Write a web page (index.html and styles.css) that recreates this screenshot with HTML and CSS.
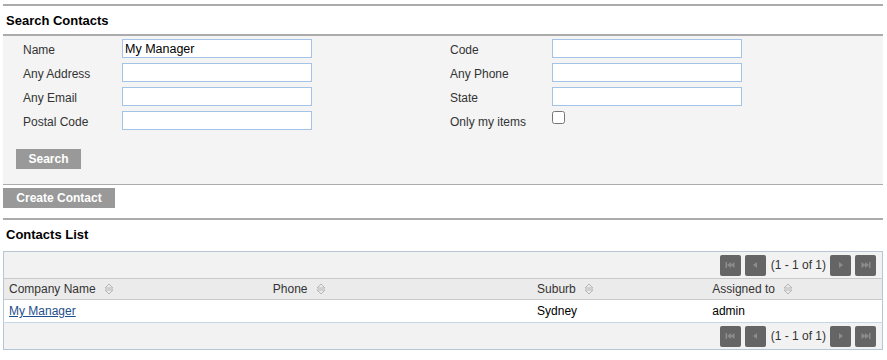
FILE: index.html
```html
<!DOCTYPE html>
<html lang="en">
<head>
  <meta charset="UTF-8">
  <title>Contacts</title>
  <link rel="stylesheet" href="styles.css">
</head>
<body>
  <div class="page">
    <div class="section-title">Search Contacts</div>
    <div class="search-panel">
      <div class="search-form">
        <label>Name</label>
        <input type="text" value="My Manager">
        <span></span>
        <label>Code</label>
        <input type="text">

        <label>Any Address</label>
        <input type="text">
        <span></span>
        <label>Any Phone</label>
        <input type="text">

        <label>Any Email</label>
        <input type="text">
        <span></span>
        <label>State</label>
        <input type="text">

        <label>Postal Code</label>
        <input type="text">
        <span></span>
        <label>Only my items</label>
        <div><input type="checkbox" class="check"></div>
      </div>
      <button class="btn search-btn">Search</button>
    </div>

    <button class="btn create-btn">Create Contact</button>

    <div class="section-title list-title">Contacts List</div>

    <table class="contacts">
      <colgroup>
        <col style="width:264px">
        <col style="width:264px">
        <col style="width:175px">
        <col style="width:175px">
      </colgroup>
      <tr class="pager-row">
        <td colspan="4">
          <div class="pager">
            <span class="pg-btn"><svg width="10" height="8" viewBox="0 0 10 8"><rect x="0.5" y="1" width="1.5" height="6" fill="#8c8c8c"/><polygon points="2,4 6,1 6,7" fill="#8c8c8c"/><polygon points="5.5,4 9.5,1 9.5,7" fill="#8c8c8c"/></svg></span>
            <span class="pg-btn"><svg width="10" height="8" viewBox="0 0 10 8"><polygon points="3,4 7,1 7,7" fill="#8c8c8c"/></svg></span>
            <span class="pg-text">(1 - 1 of 1)</span>
            <span class="pg-btn"><svg width="10" height="8" viewBox="0 0 10 8"><polygon points="7,4 3,1 3,7" fill="#8c8c8c"/></svg></span>
            <span class="pg-btn"><svg width="10" height="8" viewBox="0 0 10 8"><polygon points="0.5,1 4.5,4 0.5,7" fill="#8c8c8c"/><polygon points="4,1 8,4 4,7" fill="#8c8c8c"/><rect x="8" y="1" width="1.5" height="6" fill="#8c8c8c"/></svg></span>
          </div>
        </td>
      </tr>
      <tr class="head-row">
        <th>Company Name <svg class="sort" width="10" height="12" viewBox="0 0 10 12"><polygon points="1,5 5,1 9,5" fill="none" stroke="#b5b5b5"/><polygon points="1,7 5,11 9,7" fill="none" stroke="#b5b5b5"/></svg></th>
        <th>Phone <svg class="sort" width="10" height="12" viewBox="0 0 10 12"><polygon points="1,5 5,1 9,5" fill="none" stroke="#b5b5b5"/><polygon points="1,7 5,11 9,7" fill="none" stroke="#b5b5b5"/></svg></th>
        <th>Suburb <svg class="sort" width="10" height="12" viewBox="0 0 10 12"><polygon points="1,5 5,1 9,5" fill="none" stroke="#b5b5b5"/><polygon points="1,7 5,11 9,7" fill="none" stroke="#b5b5b5"/></svg></th>
        <th>Assigned to <svg class="sort" width="10" height="12" viewBox="0 0 10 12"><polygon points="1,5 5,1 9,5" fill="none" stroke="#b5b5b5"/><polygon points="1,7 5,11 9,7" fill="none" stroke="#b5b5b5"/></svg></th>
      </tr>
      <tr class="data-row">
        <td><a href="#">My Manager</a></td>
        <td></td>
        <td>Sydney</td>
        <td>admin</td>
      </tr>
      <tr class="pager-row">
        <td colspan="4">
          <div class="pager">
            <span class="pg-btn"><svg width="10" height="8" viewBox="0 0 10 8"><rect x="0.5" y="1" width="1.5" height="6" fill="#8c8c8c"/><polygon points="2,4 6,1 6,7" fill="#8c8c8c"/><polygon points="5.5,4 9.5,1 9.5,7" fill="#8c8c8c"/></svg></span>
            <span class="pg-btn"><svg width="10" height="8" viewBox="0 0 10 8"><polygon points="3,4 7,1 7,7" fill="#8c8c8c"/></svg></span>
            <span class="pg-text">(1 - 1 of 1)</span>
            <span class="pg-btn"><svg width="10" height="8" viewBox="0 0 10 8"><polygon points="7,4 3,1 3,7" fill="#8c8c8c"/></svg></span>
            <span class="pg-btn"><svg width="10" height="8" viewBox="0 0 10 8"><polygon points="0.5,1 4.5,4 0.5,7" fill="#8c8c8c"/><polygon points="4,1 8,4 4,7" fill="#8c8c8c"/><rect x="8" y="1" width="1.5" height="6" fill="#8c8c8c"/></svg></span>
          </div>
        </td>
      </tr>
    </table>
  </div>
</body>
</html>
```

FILE: styles.css
```css
body {
  margin: 0;
  font-family: "Liberation Sans", Arial, sans-serif;
  font-size: 12px;
  color: #333;
  background: #fff;
}
.page {
  margin: 4px 4px 0 3px;
}
.section-title {
  border-top: 2px solid #ababab;
  border-bottom: 2px solid #ababab;
  height: 28px;
  line-height: 29px;
  padding-left: 3px;
  font-size: 13px;
  font-weight: bold;
  color: #000;
}
.list-title {
  border-bottom: none;
  height: 31px;
  line-height: 30px;
}
.search-panel {
  background-color: #f4f4f4;
  border-bottom: 1px solid #ababab;
  padding-top: 3px;
}
.search-form {
  display: grid;
  grid-template-columns: 99px 190px 138px 102px 190px;
  grid-auto-rows: 24px;
  padding-left: 20px;
}
.search-form label {
  line-height: 23px;
}
.search-form input[type="text"] {
  box-sizing: border-box;
  width: 190px;
  height: 19px;
  margin: 0;
  padding: 0 2px;
  border: 1px solid #a3c4e6;
  background: #fff;
  font-family: "Liberation Sans", Arial, sans-serif;
  font-size: 12.5px;
  color: #000;
  outline: none;
}
.check {
  width: 13px;
  height: 13px;
  margin: 0;
}
.btn {
  display: block;
  background-color: #999;
  color: #fff;
  border: none;
  font-family: "Liberation Sans", Arial, sans-serif;
  font-size: 12px;
  font-weight: bold;
  height: 20px;
  padding: 0;
  cursor: pointer;
}
.search-btn {
  width: 65px;
  margin: 14px 0 15px 13px;
}
.create-btn {
  width: 112px;
  margin: 3px 0 10px 0;
}
.contacts {
  width: 880px;
  border-collapse: collapse;
  table-layout: fixed;
  border: 1px solid #b6c6d6;
}
.contacts td, .contacts th {
  padding: 0 0 0 5px;
  text-align: left;
  white-space: nowrap;
}
.pager-row td {
  background-color: #f2f2f2;
  height: 26px;
  padding: 0;
}
.pager {
  display: flex;
  justify-content: flex-end;
  align-items: center;
  gap: 4px;
  padding-right: 6px;
}
.pg-btn {
  width: 21px;
  height: 21px;
  border-radius: 2px;
  background-color: #656565;
  display: flex;
  align-items: center;
  justify-content: center;
}
.pg-text {
  margin: 0 0 0 1px;
  color: #333;
}
.head-row th {
  background-color: #ebebeb;
  border-top: 1px solid #c9c9c9;
  border-bottom: 1px solid #c9c9c9;
  height: 20px;
  font-weight: normal;
  color: #333;
}
.sort {
  vertical-align: -2px;
  margin-left: 5px;
}
.data-row td {
  height: 22px;
  border-bottom: 1px solid #c5d6e7;
  color: #000;
  background: #fff;
}
.data-row a {
  color: #1f4e8c;
}
```
